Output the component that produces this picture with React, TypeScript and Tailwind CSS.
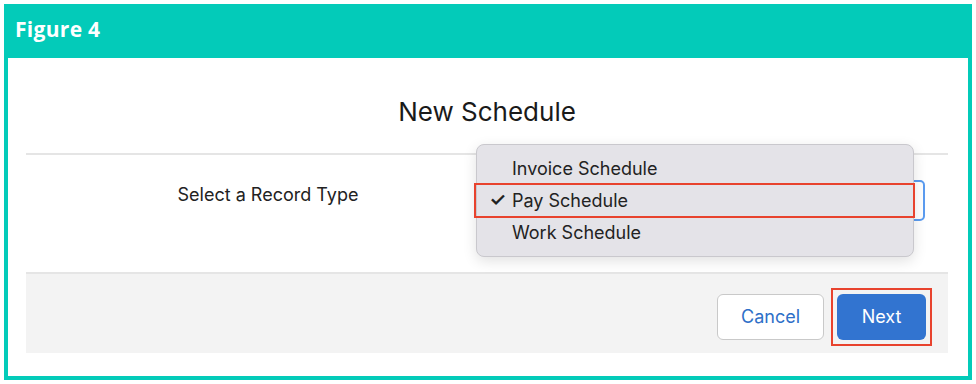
const options = ['Invoice Schedule', 'Pay Schedule', 'Work Schedule'];

export default function App() {
  return (
    <div className="h-[384px] w-[976px] bg-white p-[4px] font-['Inter',sans-serif]">
      <div className="flex h-[376px] w-[968px] flex-col">
        {/* header */}
        <div className="flex h-[54px] items-center bg-[#03cbb9] px-[11px] pb-[2px]">
          <span className="font-['Open_Sans',sans-serif] text-[21px] font-bold tracking-[0.3px] text-white">
            Figure 4
          </span>
        </div>

        {/* body */}
        <div className="flex flex-1 flex-col border-x-4 border-b-4 border-[#03cbb9] bg-white pr-[20px] pl-[18px]">
          <div className="flex h-[95px] items-center justify-center pt-[12px]">
            <h1 className="text-[26px] text-[#1a1a1a]">New Schedule</h1>
          </div>
          <div className="h-[2px] bg-[#e5e5e5]"></div>

          {/* record type row */}
          <div className="relative flex h-[117px] items-start">
            <div className="flex w-[484px] justify-center pt-[26px]">
              <span className="text-[18px] text-[#222]">Select a Record Type</span>
            </div>
            <div className="mt-[25px] h-[41px] w-[415px] rounded-[5px] border-2 border-[#5b9cf0] bg-white"></div>

            {/* open menu */}
            <div className="absolute top-[-11px] left-[450px] w-[438px] rounded-[8px] border border-[#c9c8cd] bg-[#e4e3e8] pt-[7px] pb-[8px] shadow-[0_4px_14px_rgba(0,0,0,0.12)]">
              {options.map((o) => (
                <div key={o} className="relative flex h-[32px] items-center text-[18px] text-[#222]">
                  <span className="flex w-[35px] justify-end pr-[6px] text-[19px] font-semibold">
                    {o === 'Pay Schedule' ? '✓' : ''}
                  </span>
                  {o}
                  {o === 'Pay Schedule' && (
                    <span className="absolute -top-[1px] -right-[2px] -bottom-[2px] -left-[3px] border-2 border-[#e8432e]"></span>
                  )}
                </div>
              ))}
            </div>
          </div>

          <div className="h-[2px] bg-[#e5e5e5]"></div>

          {/* footer */}
          <div className="flex h-[79px] items-center justify-end gap-[7px] bg-[#f3f3f3] pt-[6px] pr-[16px]">
            <button className="h-[46px] w-[107px] rounded-[6px] border border-[#c9c9c9] bg-white text-[18px] text-[#2e6fc8]">
              Cancel
            </button>
            <div className="border-2 border-[#e8432e] p-[4px]">
              <button className="h-[46px] w-[89px] rounded-[6px] bg-[#3274d0] text-[18px] text-white">
                Next
              </button>
            </div>
          </div>
        </div>
      </div>
    </div>
  );
}
